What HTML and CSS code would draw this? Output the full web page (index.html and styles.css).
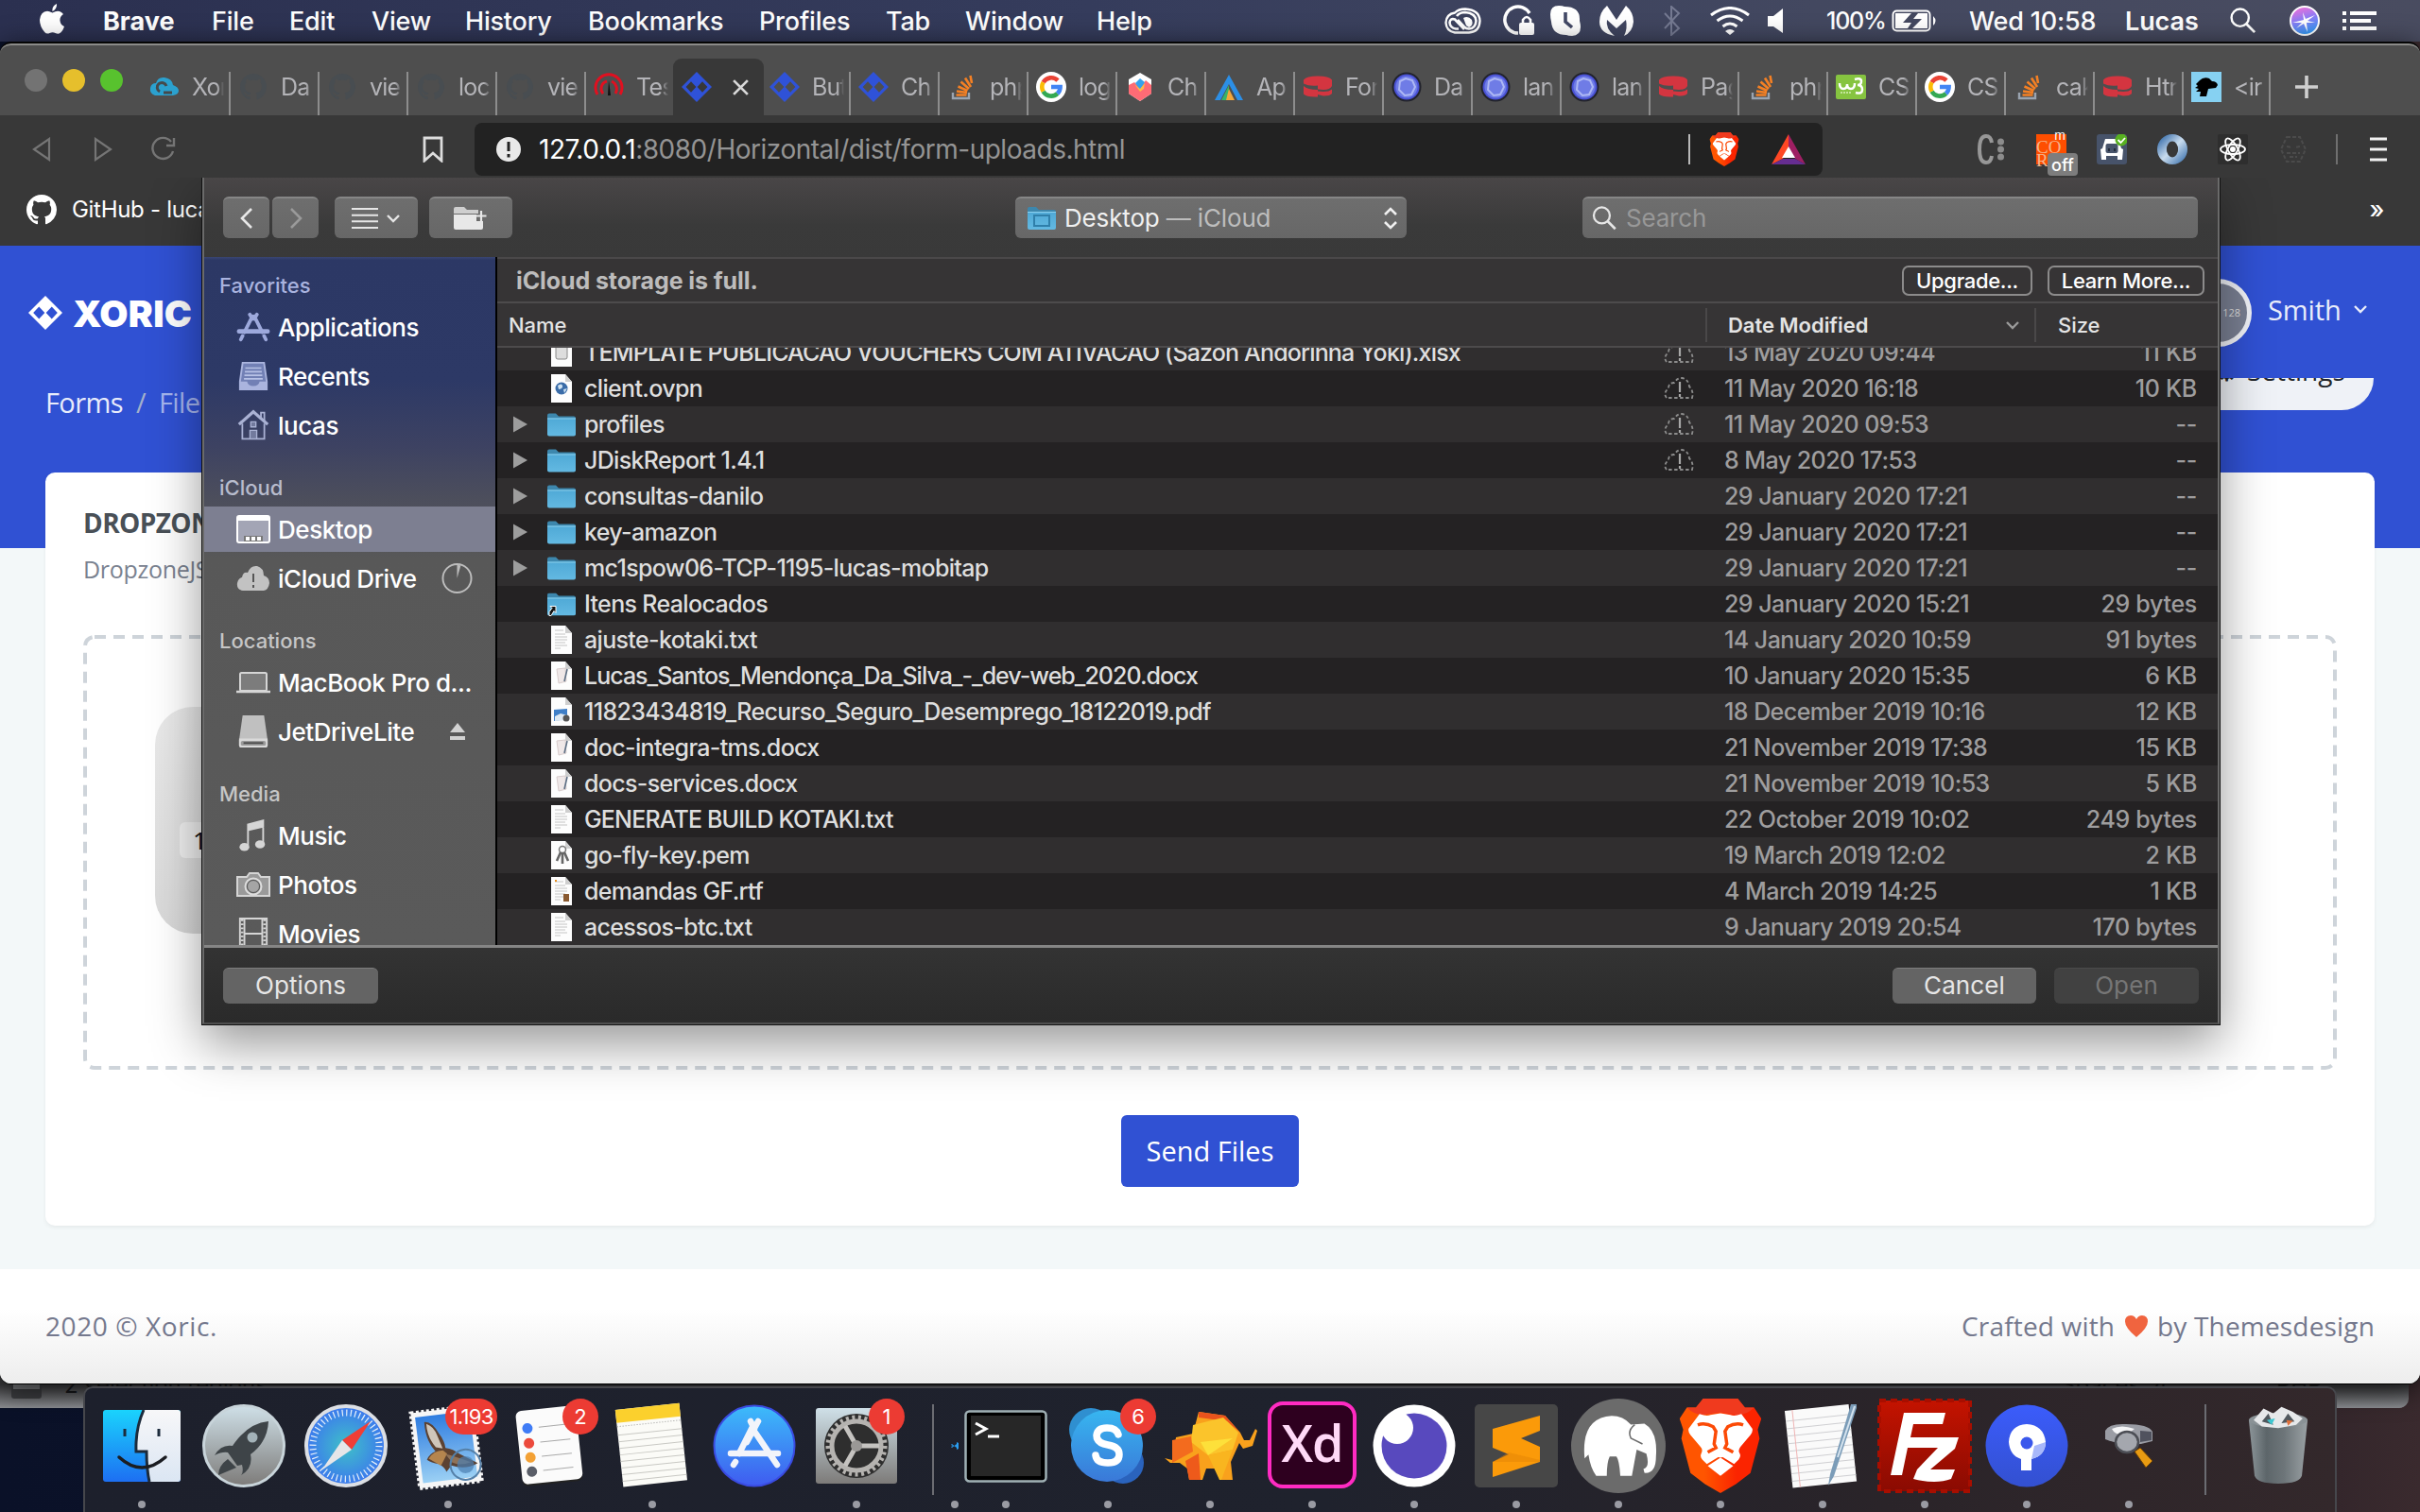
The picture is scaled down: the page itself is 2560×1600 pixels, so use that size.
FILE: index.html
```html
<!DOCTYPE html>
<html lang="en">
<head>
<meta charset="utf-8">
<title>Xoric - File Uploads</title>
<link rel="stylesheet" href="styles.css">
</head>
<body>
<svg class="defs" aria-hidden="true">
  <defs>
    <linearGradient id="gFolder" x1="0" y1="0" x2="0" y2="1"><stop offset="0" stop-color="#4fa9d6"/><stop offset="1" stop-color="#63b9e2"/></linearGradient>
    <linearGradient id="gSilver" x1="0" y1="0" x2="0" y2="1"><stop offset="0" stop-color="#cfe0e8"/><stop offset="1" stop-color="#7d7b79"/></linearGradient>
    <linearGradient id="gFinder" x1="0" y1="0" x2="0" y2="1"><stop offset="0" stop-color="#1ad3fd"/><stop offset="1" stop-color="#1d6ff2"/></linearGradient>
    <linearGradient id="gFace" x1="0" y1="0" x2="0" y2="1"><stop offset="0" stop-color="#f7f7f9"/><stop offset="1" stop-color="#dbe6f3"/></linearGradient>
    <radialGradient id="gSafari"><stop offset="0" stop-color="#3fc0c8"/><stop offset="1" stop-color="#3c78ee"/></radialGradient>
    <linearGradient id="gStore" x1="0" y1="0" x2="0" y2="1"><stop offset="0" stop-color="#3cbcfa"/><stop offset="1" stop-color="#3f5bf0"/></linearGradient>
    <linearGradient id="gSkype" x1="0" y1="0" x2="0" y2="1"><stop offset="0" stop-color="#37b6f0"/><stop offset="1" stop-color="#3a78d8"/></linearGradient>
    <linearGradient id="gLion" x1="0" y1="0" x2="1" y2="0"><stop offset=".3" stop-color="#ff5500"/><stop offset=".7" stop-color="#fb2400"/></linearGradient>
    <linearGradient id="gFz" x1="0" y1="0" x2="0" y2="1"><stop offset="0" stop-color="#c41300"/><stop offset="1" stop-color="#8a0b02"/></linearGradient>
    <linearGradient id="gFork" x1="0" y1="0" x2="0" y2="1"><stop offset="0" stop-color="#3b5cfb"/><stop offset="1" stop-color="#3350d0"/></linearGradient>
    <linearGradient id="gTrash" x1="0" y1="0" x2="1" y2="0"><stop offset="0" stop-color="#8d969a"/><stop offset=".3" stop-color="#5d666a"/><stop offset=".6" stop-color="#6d7579"/><stop offset="1" stop-color="#9aa1a4"/></linearGradient>
    <linearGradient id="gSky" x1="0" y1="0" x2="0" y2="1"><stop offset="0" stop-color="#2f7de0"/><stop offset="1" stop-color="#9bd0f4"/></linearGradient>
    <linearGradient id="gSiri" x1=".3" y1="0" x2=".6" y2="1"><stop offset="0" stop-color="#f06fd8"/><stop offset=".45" stop-color="#8d7cf5"/><stop offset="1" stop-color="#2c9cf5"/></linearGradient>
    <linearGradient id="gRing" x1="0" y1="0" x2="1" y2="1"><stop offset="0" stop-color="#4f7fb5"/><stop offset=".5" stop-color="#c9dcee"/><stop offset="1" stop-color="#5a88bb"/></linearGradient>

    <symbol id="folder" viewBox="0 0 30 24"><path d="M0 2q0-2 2-2h7l3 3h16q2 0 2 2v3H0z" fill="#3d87ad"/><path d="M0 5h30v17q0 2-2 2H2q-2 0-2-2z" fill="url(#gFolder)"/><path d="M0 5.500h30" stroke="#8bd0ee"/></symbol>
    <symbol id="doc" viewBox="0 0 24 30"><path d="M1 0h15l7 8v22H1z" fill="#fdfdfd"/><path d="M16 0l7 8h-7z" fill="#cfcfcf"/></symbol>
    <symbol id="txt" viewBox="0 0 24 30"><use href="#doc"/><path d="M5 5h9M5 9h11M5 12h13M5 15h13M5 18h11M5 21h13M5 24h6" stroke="#c4c4c4"/></symbol>
    <symbol id="word" viewBox="0 0 24 30"><use href="#doc"/><path d="M7 8l9-1 1 14-8 2z" fill="#efe8e8" stroke="#d8cccc"/><path d="M18 8l-3 13" stroke="#5d6f84" stroke-width="1.600"/></symbol>
    <symbol id="tri" viewBox="0 0 16 18"><path d="M0 0l16 9L0 18z" fill="#9d9d9d"/></symbol>
    <symbol id="cloudw" viewBox="0 0 32 24"><path d="M3 22q-4-5 2-10 0-6 6-6 3-5 8-5 7 1 8 9 5 5 3 12z" fill="none" stroke="#8c8c8c" stroke-width="1.800" stroke-dasharray="3.500 2.500"/><path d="M17 5v11M17 18v3" stroke="#a8a8a8" stroke-width="2.200"/></symbol>

    <symbol id="xlogo" viewBox="0 0 32 32"><path fill-rule="evenodd" d="M16 0L32 16 16 32 0 16zM10 10.200L4.600 16l5.400 5.800L15.400 16zM22 10.200L16.600 16l5.400 5.800L27.400 16z"/></symbol>
    <symbol id="octo" viewBox="0 0 16 16"><path d="M8 0C3.580 0 0 3.580 0 8c0 3.540 2.290 6.530 5.470 7.590.4.070.55-.17.55-.38 0-.19-.01-.82-.01-1.490-2.010.37-2.530-.49-2.690-.94-.09-.23-.48-.94-.82-1.130-.28-.15-.68-.52-.01-.53.630-.01 1.080.58 1.230.82.720 1.210 1.870.87 2.330.66.070-.52.280-.87.510-1.070-1.780-.2-3.640-.89-3.640-3.950 0-.87.310-1.590.820-2.150-.08-.2-.36-1.020.080-2.120 0 0 .67-.21 2.200.82.640-.18 1.320-.27 2-.27s1.360.09 2 .27c1.530-1.040 2.200-.82 2.200-.82.440 1.100.160 1.920.080 2.120.510.560.820 1.270.820 2.150 0 3.070-1.870 3.750-3.650 3.950.290.250.540.730.540 1.480 0 1.070-.01 1.930-.01 2.200 0 .210.150.460.550.380A8.010 8.010 0 0016 8c0-4.420-3.580-8-8-8z"/></symbol>
    <symbol id="so" viewBox="0 0 32 32"><path d="M6 22v6h17v-6" fill="none" stroke="#9aa4b0" stroke-width="2.400"/><path d="M9.500 24.500h11M10 20.500l11 1.500M11.500 15.500l10 4.500M14.500 10.500l8.500 7.500M19 6.500l6 9.500M24.500 4l1.500 8" stroke="#f48024" stroke-width="2.600"/></symbol>
    <symbol id="goog" viewBox="0 0 32 32"><circle cx="16" cy="16" r="16" fill="#fff"/><g fill="none" stroke-width="4.600"><path d="M7.600 11.200A9.700 9.700 0 0 1 23 9.200" stroke="#ea4335"/><path d="M7.600 11.200a9.700 9.700 0 0 0 0 9.600" stroke="#fbbc05"/><path d="M7.600 20.800A9.700 9.700 0 0 0 22.600 23" stroke="#34a853"/><path d="M16 16h9.600a9.700 9.700 0 0 1-3 7" stroke="#4285f4"/></g></symbol>
    <symbol id="cake" viewBox="0 0 32 32"><path d="M1 8.500Q4 4.500 16 4.500t15 4V15q-2 4-9 4l-6-.5V14.500q-9 1-15-2zM1 15q4 4 15 4v7.500Q4 27 1 23.500zM16 20.500l6 .500q6 0 9-2.500V23q-2 2.500-9 2.500l-6-1.500z" fill="#d43540"/></symbol>
    <symbol id="dt" viewBox="0 0 32 32"><circle cx="16" cy="16" r="15.500" fill="#22232c"/><circle cx="16" cy="16" r="13.500" fill="#4a52d6"/><circle cx="16" cy="16" r="11.500" fill="#6f7ce6"/><path d="M9 10l6-3 7 2 3 7-4 8-7 1-6-6z" fill="none" stroke="#aeb8f4" stroke-width="2"/></symbol>
    <symbol id="lion" viewBox="0 0 90 104"><path d="M26 0h38l8 10h10l8 12-4 12 2 10-10 38-16 12-17 10-17-10-16-12L2 44l2-10L0 22 8 10h10z" fill="url(#gLion)"/><path d="M26 0h38l8 10h10q-8 8-18 8l-19-3-19 3Q16 18 8 10h10z" fill="#f03a1e"/><path d="M22 17q8 3 12 1l11-2 11 2q4 2 12-1l12 16q1 3-2 7L67 53q-3 4-1 7t-1 7l-5 5-15-9-15 9-5-5q-3-3-1-7t-1-7L12 40q-3-4-2-7z" fill="#fff"/><path d="M20 29q8-3 17 2l3 5-2 14 2 4-9 5M70 29q-8-3-17 2l-3 5 2 14-2 4 9 5" fill="none" stroke="#fc4a06" stroke-width="3.600"/><path d="M31 61l14-5 14 5-14 4z" fill="#fff"/><path d="M31 74l14-9 14 9-14 11z" fill="#fff"/></symbol>
    <symbol id="mag" viewBox="0 0 30 30"><circle cx="11.500" cy="11.500" r="9.800" fill="none" stroke="currentColor" stroke-width="2.600"/><path d="M18.500 18.500l9.500 9.500" stroke="currentColor" stroke-width="3"/></symbol>
    <symbol id="chev" viewBox="0 0 16 10"><path d="M2 2l6 6 6-6" fill="none" stroke="currentColor" stroke-width="2.400"/></symbol>
  </defs>
</svg>

<div class="desktop">
  <header class="menubar">
    <svg class="apple" viewBox="0 0 26 32"><path d="M18 0q.5 5-4.500 8-.8-5.500 4.500-8zM13.500 9.500Q18 6.800 21 8q2.500.8 4 3-4 2.600-3.500 7T26 24q-2 6-5.500 7.600-2 .4-4-.7-2.700-1.200-6 0-3 1.600-5.300-.9Q0 24 0 17q1-9 8-9.300 2 0 5.500 1.800z" fill="#fff"/></svg>
    <nav class="menus"><b>Brave</b><span>File</span><span>Edit</span><span>View</span><span>History</span><span>Bookmarks</span><span>Profiles</span><span>Tab</span><span>Window</span><span>Help</span></nav>
    <div class="status">
      <svg width="39" height="28" viewBox="0 0 39 28"><path d="M11 5.500Q15 1.500 22 1.500q15 1 15.500 12.500Q37 26 26 26.500H11Q2 25 1.500 16 2 7 11 5.500z" fill="none" stroke="#fff" stroke-width="2.400"/><path d="M21 23L11 12.500Q6 11 5.500 16 6 21.500 12 22.500h3" fill="none" stroke="#fff" stroke-width="2.600"/><path d="M13 9q3-4 9-4 11 1 11.500 9-.5 8-7.500 8.500-3 0-5-2L14 13" fill="none" stroke="#fff" stroke-width="2.600"/><path d="M20 11q5-3 9 2 2 6-3 8l-3-2z" fill="#fff"/></svg>
      <svg width="36" height="34" viewBox="0 0 36 34"><path d="M29 9A14 14 0 1 0 17 30" fill="none" stroke="#fff" stroke-width="3.500"/><path d="M22 20v-4q4-6 8 0v4" fill="none" stroke="#fff" stroke-width="2.600"/><rect x="18" y="19" width="16" height="13" rx="2" fill="#fff"/></svg>
      <svg width="32" height="32" viewBox="0 0 32 32"><path d="M0 9Q0 0 9 0q4 0 6 1 17 0 16 15 4 15-8 16-4 0-6-1Q2 31 1 17 0 13 0 9z" fill="#fff"/><path d="M16 7v10l7 6" fill="none" stroke="#434966" stroke-width="3.600"/></svg>
      <svg width="36" height="32" viewBox="0 0 36 32"><path d="M8 0l10 15L28 0q8 7 8 17-1 11-10 15 4-8 2-17l-10 9-10-9q-2 9 8 17Q0 29 0 17 0 7 8 0z" fill="#fff"/></svg>
      <svg width="20" height="32" viewBox="0 0 20 32"><path d="M2 8l15 16-8 7V1l8 7L2 24" fill="none" stroke="#757a92" stroke-width="2"/></svg>
      <svg width="42" height="30" viewBox="0 0 42 30"><g fill="none" stroke="#fff" stroke-width="3"><path d="M1 9q20-15 40 0M7.500 15q13.500-10 27 0M13.500 21q7.500-6 15 0"/></g><path d="M16 26q5-4 10 0l-5 4z" fill="#fff"/></svg>
      <svg width="18" height="26" viewBox="0 0 18 26"><path d="M0 8h6L16 0v26L6 19H0z" fill="#fff"/></svg>
      <span class="pct">100%</span>
      <svg width="48" height="24" viewBox="0 0 48 24"><rect x="1.500" y="1.500" width="39" height="21" rx="4" fill="none" stroke="#fff" stroke-width="2"/><path d="M44 7q5 5 0 10z" fill="#fff"/><path d="M4 4h17l-9 10h9l-4 6H4zM38 20H22l10-10h-9l5-6h10z" fill="#fff"/></svg>
      <span class="clock">Wed 10:58</span>
      <span class="user">Lucas</span>
      <svg class="w" width="30" height="28"><use href="#mag"/></svg>
      <svg width="32" height="32" viewBox="0 0 32 32"><circle cx="16" cy="16" r="15" fill="url(#gSiri)" stroke="#fff" stroke-width="2"/><path d="M3 18l12-3-1-8 3 7 10-4-8 6 8 2-9 0 1 10-4-9-8 5 6-6z" fill="#fff"/></svg>
      <svg width="36" height="20" viewBox="0 0 36 20"><path d="M8 2h28M8 10h22M8 18h28M0 2h4M0 10h4M0 18h4" stroke="#fff" stroke-width="4"/></svg>
    </div>
  </header>

  <div class="behind"><svg width="32" height="30" viewBox="0 0 32 30"><rect width="32" height="30" rx="3" fill="#3c3d40"/><path d="M2 2h28v18H2z" fill="#77797c"/></svg><span class="b1">2 selection regions</span><span class="b2">Spaces: 4</span><span class="b3">PHP</span></div>

  <section class="browser">
    <div class="tabstrip">
      <div class="lights"><i></i><i class="y"></i><i class="g"></i></div>
      <div class="tab"><svg viewBox="0 0 32 32"><path d="M6 25q-6-2-5-8 1-5 6-5Q9 5 16 6q8 1 9 8 6 2 6 6t-6 5z" fill="#2ba1cf"/><path d="M11 21a5 5 0 1 1 7-6M15 22h9" fill="none" stroke="#45494b" stroke-width="3"/></svg><span>Xor</span></div>
      <div class="tab"><svg class="dim" viewBox="0 0 16 16"><use href="#octo"/></svg><span>Da</span></div>
      <div class="tab"><svg class="dim" viewBox="0 0 16 16"><use href="#octo"/></svg><span>vie</span></div>
      <div class="tab"><svg class="dim" viewBox="0 0 16 16"><use href="#octo"/></svg><span>loc</span></div>
      <div class="tab"><svg class="dim" viewBox="0 0 16 16"><use href="#octo"/></svg><span>vie</span></div>
      <div class="tab last"><svg viewBox="0 0 32 32"><path d="M4 24a14 14 0 1 1 24 0M10 23a8 8 0 0 1 4-13M19 10a9 9 0 0 1 4 13" fill="none" stroke="#e01020" stroke-width="3"/><path d="M15 25l1-16 2 16z" fill="#111"/></svg><span>Tes</span></div>
      <div class="tab active"><svg class="blue" viewBox="0 0 32 32"><use href="#xlogo"/></svg><svg class="x" viewBox="0 0 18 18"><path d="M2 2l14 14M16 2L2 16" stroke="#d8d8d8" stroke-width="2.600"/></svg></div>
      <div class="tab"><svg class="blue" viewBox="0 0 32 32"><use href="#xlogo"/></svg><span>But</span></div>
      <div class="tab"><svg class="blue" viewBox="0 0 32 32"><use href="#xlogo"/></svg><span>Ch</span></div>
      <div class="tab"><svg viewBox="0 0 32 32"><use href="#so"/></svg><span>php</span></div>
      <div class="tab"><svg viewBox="0 0 32 32"><use href="#goog"/></svg><span>log</span></div>
      <div class="tab"><svg viewBox="0 0 32 32"><path d="M16 1l12 7v15l-12 8-12-8V8z" fill="#fff"/><path d="M4 14l6-3 6 6 6-8 6 5v9l-12 8-12-8z" fill="#fe6b75"/><path d="M11 12l5-5 5 4-5 8z" fill="#36a2eb"/><path d="M10 13l6 5 5-6-1 6-4 3z" fill="#ffb94a"/></svg><span>Ch</span></div>
      <div class="tab"><svg viewBox="0 0 32 32"><path d="M16 3L1 30h6l9-17 9 17h6z" fill="#2c8fe6"/><path d="M16 14L8 30h8z" fill="#37b36b"/><path d="M16 18l6 12h-9z" fill="#f2a73b"/></svg><span>Ap</span></div>
      <div class="tab"><svg viewBox="0 0 32 32"><use href="#cake"/></svg><span>For</span></div>
      <div class="tab"><svg viewBox="0 0 32 32"><use href="#dt"/></svg><span>Da</span></div>
      <div class="tab"><svg viewBox="0 0 32 32"><use href="#dt"/></svg><span>lan</span></div>
      <div class="tab"><svg viewBox="0 0 32 32"><use href="#dt"/></svg><span>lan</span></div>
      <div class="tab"><svg viewBox="0 0 32 32"><use href="#cake"/></svg><span>Pag</span></div>
      <div class="tab"><svg viewBox="0 0 32 32"><use href="#so"/></svg><span>php</span></div>
      <div class="tab"><svg viewBox="0 0 32 32"><rect y="3" width="32" height="26" rx="2" fill="#86c440"/><path d="M4 12q0 6 4 6t4-5q0 5 4 5t4-6M20 8q7-2 7 2 0 4-4 4 5 0 5 5 0 5-7 3" fill="none" stroke="#fff" stroke-width="2.500"/><path d="M5 22h12" stroke="#d8f0b8" stroke-width="1.500" stroke-dasharray="2 1"/></svg><span>CS</span></div>
      <div class="tab"><svg viewBox="0 0 32 32"><use href="#goog"/></svg><span>CS</span></div>
      <div class="tab"><svg viewBox="0 0 32 32"><use href="#so"/></svg><span>cak</span></div>
      <div class="tab"><svg viewBox="0 0 32 32"><use href="#cake"/></svg><span>Htr</span></div>
      <div class="tab end"><svg viewBox="0 0 32 32"><path d="M0 0h32v32H0z" fill="#86d1f2"/><path d="M5 13l4-4q4-4 10-2l3 3q5 0 6 4l-2 3-8 1-2 8-7 0 1-5-5 0 3-3-4-1 3-2z" fill="#000"/></svg><span>&lt;ir</span></div>
      <svg class="plus" viewBox="0 0 24 24"><path d="M12 0v24M0 12h24" stroke="#cfcfcf" stroke-width="3.600"/></svg>
    </div>

    <div class="toolbar">
      <svg width="20" height="26" viewBox="0 0 20 26"><path d="M18 2v22L2 13z" fill="none" stroke="#757575" stroke-width="2.200"/></svg>
      <svg width="20" height="26" viewBox="0 0 20 26"><path d="M2 2v22l16-11z" fill="none" stroke="#757575" stroke-width="2.200"/></svg>
      <svg width="28" height="28" viewBox="0 0 28 28"><path d="M22 6A11 11 0 1 0 24 16M25 2v8h-8" fill="none" stroke="#757575" stroke-width="2.400"/></svg>
      <svg width="22" height="28" viewBox="0 0 22 28"><path d="M2 2h18v24l-9-8-9 8z" fill="none" stroke="#ddd" stroke-width="2.800"/></svg>
      <div class="url">
        <svg width="26" height="26" viewBox="0 0 26 26"><circle cx="13" cy="13" r="13" fill="#e9e9e9"/><path d="M13 5v10M13 18v3.500" stroke="#222" stroke-width="3"/></svg>
        <span class="addr"><em>127.0.0.1</em>:8080/Horizontal/dist/form-uploads.html</span>
        <i class="bar"></i>
        <svg width="32" height="36" viewBox="0 0 90 104"><use href="#lion"/></svg>
        <svg width="36" height="32" viewBox="0 0 36 32"><path d="M18 0v14L12 26 0 32z" fill="#ff4724"/><path d="M18 0v14l7 12 11 6z" fill="#9e1f63"/><path d="M0 32h36l-11-6H12z" fill="#662d91"/><path d="M18 13l7 12H11z" fill="#fff"/></svg>
      </div>
      <svg width="28" height="32" viewBox="0 0 28 32"><path d="M15 9Q14 2 9 2 2 2 2 16t7 14q5 0 6-7" fill="none" stroke="#979797" stroke-width="4"/><circle cx="24.500" cy="8" r="3.500" fill="#8c8c8c"/><circle cx="24.500" cy="16" r="3.500" fill="#8c8c8c"/><circle cx="24.500" cy="24" r="3.500" fill="#8c8c8c"/></svg>
      <div class="cors"><span>CO</span><sup>m</sup><span class="r">R</span><b>off</b></div>
      <svg width="32" height="32" viewBox="0 0 32 32"><rect width="32" height="32" rx="3" fill="#47536a"/><path d="M9 5h14l3 10 2 1-1 11h-5v-4H10v4H5L4 16l2-1z" fill="#fff"/><rect x="9.500" y="10" width="13" height="10" rx="2" fill="#47536a"/><path d="M13 15v3M19 15v3" stroke="#222b3a" stroke-width="2"/><circle cx="26" cy="6" r="6.500" fill="#58b020"/><path d="M22.500 6l3 3 4.500-5" fill="none" stroke="#fff" stroke-width="1.800"/></svg>
      <svg width="32" height="32" viewBox="0 0 32 32"><circle cx="16" cy="16" r="11" fill="none" stroke="url(#gRing)" stroke-width="10"/><ellipse cx="16" cy="16" rx="6" ry="8.500" fill="#383838"/></svg>
      <svg width="32" height="32" viewBox="0 0 32 32"><rect width="32" height="32" rx="2" fill="#2e2e2e"/><g fill="none" stroke="#fff" stroke-width="1.800"><ellipse cx="16" cy="16" rx="13" ry="5"/><ellipse cx="16" cy="16" rx="13" ry="5" transform="rotate(60 16 16)"/><ellipse cx="16" cy="16" rx="13" ry="5" transform="rotate(120 16 16)"/></g><circle cx="16" cy="16" r="3" fill="#fff"/></svg>
      <svg width="32" height="32" viewBox="0 0 32 32"><path d="M9 3h14l6 13-6 13H9L3 16zM9 13l6 1M23 13l-6 1M9 20h14M12 24h8" fill="none" stroke="#4b4b4b" stroke-width="2" stroke-dasharray="4 2"/></svg>
      <i class="bar dimbar"></i>
      <svg width="18" height="26" viewBox="0 0 18 26"><path d="M0 2h18M0 13h18M0 24h18" stroke="#f2f2f2" stroke-width="3"/></svg>
    </div>

    <div class="bookmarks"><svg viewBox="0 0 16 16" width="32" height="32"><use href="#octo" fill="#fff"/></svg><span>GitHub - luca</span><b>»</b></div>

    <main class="page">
      <div class="hero">
        <div class="brand"><svg class="logo" viewBox="0 0 32 32"><use href="#xlogo"/></svg><span>XORIC</span><div class="profile"><div class="avatar">128</div><span>Smith</span><svg width="16" height="10"><use href="#chev"/></svg></div></div>
        <div class="crumbs"><span>Forms</span><i>/</i><em>File</em></div>
        <div class="settings"><span>⚙</span><span>Settings</span></div>
      </div>
      <div class="card">
        <h4>DROPZONE</h4>
        <p>DropzoneJS</p>
        <div class="dropzone"><svg class="dash"><rect x="2" y="2" width="2380" height="456" rx="10"/></svg><div class="preview"><span>1</span></div></div>
        <button class="send">Send Files</button>
      </div>
      <footer class="foot"><span class="cr">2020 © Xoric.</span><span class="by">Crafted with <svg width="24" height="23" viewBox="0 0 24 23"><path d="M12 23Q0 13 0 6.500 0 0 6 0q4 0 6 4 2-4 6-4 6 0 6 6.500Q24 13 12 23z" fill="#f0643f"/></svg> by Themesdesign</span></footer>
    </main>
  </section>

  <div class="sheet-clip">
  <section class="sheet">
    <div class="sheet-head">
      <div class="btn back"><svg width="14" height="24" viewBox="0 0 14 24"><path d="M12 2L2 12l10 10" fill="none" stroke="#e8e8e8" stroke-width="2.600"/></svg></div>
      <div class="btn fwd"><svg width="14" height="24" viewBox="0 0 14 24"><path d="M2 2l10 10L2 22" fill="none" stroke="#9a9a9a" stroke-width="2.600"/></svg></div>
      <div class="btn view"><svg width="28" height="22" viewBox="0 0 28 22"><path d="M0 1h28M0 7.700h28M0 14.300h28M0 21h28" stroke="#e6e6e6" stroke-width="2"/></svg><svg class="lt" width="16" height="10"><use href="#chev"/></svg></div>
      <div class="btn newf"><svg width="36" height="24" viewBox="0 0 36 24"><path d="M0 2q0-2 2-2h9l3 3h12v4H0z" fill="#cfcfcf"/><path d="M0 8h24v7h7v7q0 2-2 2H2q-2 0-2-2z" fill="#e8e8e8"/><path d="M29 4v11M23.500 9.500h11" stroke="#e8e8e8" stroke-width="2.200"/></svg></div>
      <div class="btn popup"><svg width="30" height="24" viewBox="0 0 30 24"><use href="#folder"/><path d="M7 9h16v11H7z" fill="none" stroke="#2f7faa" stroke-width="2"/></svg><span>Desktop <em>— iCloud</em></span><svg class="ud" width="16" height="24" viewBox="0 0 16 24"><path d="M2 8l6-6 6 6M2 16l6 6 6-6" fill="none" stroke="#f0f0f0" stroke-width="2.600"/></svg></div>
      <div class="btn search"><svg width="27" height="26"><use href="#mag"/></svg><span>Search</span></div>
    </div>
    <div class="sheet-body">
      <aside class="side">
        <h5>Favorites</h5>
        <div class="it"><svg viewBox="0 0 36 36"><path d="M17 6l-9 18M19 6l9 18M14 4l3 5M22 4l-3 5M6 28l-2 4M30 28l2 4" stroke="#9da9dc" stroke-width="4" stroke-linecap="round"/><path d="M2 23h32" stroke="#9da9dc" stroke-width="5" stroke-linecap="round"/></svg><span>Applications</span></div>
        <div class="it"><svg viewBox="0 0 36 36"><path d="M6 3h24l3 21v9H3v-9z" fill="#7280b5" stroke="#aab4de" stroke-width="2"/><path d="M9 9h18M8.500 13h19M8 17h20M7.500 21h21" stroke="#b8c1e6" stroke-width="1.800"/><path d="M3 24h8q1 5 7 5t7-5h8v9H3z" fill="#aab4de"/></svg><span>Recents</span></div>
        <div class="it"><svg viewBox="0 0 36 38"><path d="M5 17v18h26V17M27 10V4h4v10" fill="none" stroke="#aab2d4" stroke-width="2"/><path d="M1 18L18 3l17 15" fill="none" stroke="#aab2d4" stroke-width="3.600"/><path d="M15 15h6v6h-6zM14 25h8v10h-8z" fill="#727a9d" stroke="#aab2d4" stroke-width="1.500"/></svg><span>lucas</span></div>
        <h5 class="ic">iCloud</h5>
        <div class="it sel"><svg viewBox="0 0 36 30"><rect x="1" y="1" width="34" height="28" rx="2" fill="#a3a5b5" stroke="#fff" stroke-width="2"/><path d="M1 1h34v5H1z" fill="#fff"/><path d="M8 22h20v6H8z" fill="#777"/><path d="M10 25h4M16 25h4M22 25h4" stroke="#fff" stroke-width="4"/></svg><span>Desktop</span></div>
        <div class="it"><svg viewBox="0 0 36 28"><path d="M7 27q-7-1-6-8 1-5 5-6 1-6 6-5 3-8 10-7 7 2 7 10 6 2 6 8-1 7-6 8z" fill="#c2c2c2"/><path d="M18 9v9M18 21v3" stroke="#555" stroke-width="2"/></svg><span>iCloud Drive</span><svg class="end pie" viewBox="0 0 34 34"><circle cx="17" cy="17" r="15.500" fill="none" stroke="#bdbdbd" stroke-width="2"/><path d="M17 17V2l4 1z" fill="#bdbdbd"/></svg></div>
        <h5 class="lo">Locations</h5>
        <div class="it"><svg viewBox="0 0 36 24"><rect x="4" y="2" width="28" height="19" rx="1.500" fill="#7c7c7c" stroke="#d5d5d5" stroke-width="2"/><path d="M0 22h36" stroke="#d5d5d5" stroke-width="2.500"/></svg><span>MacBook Pro d...</span></div>
        <div class="it"><svg viewBox="0 0 36 36"><path d="M6 0h24l4 28v5q0 3-3 3H5q-3 0-3-3v-5z" fill="#c0c0c0"/><path d="M2 26h32v7q0 3-3 3H5q-3 0-3-3z" fill="#dadada"/><rect x="4" y="28.500" width="28" height="5.500" rx="2" fill="#9a9a9a"/><path d="M7 31h22" stroke="#4d4d4d" stroke-width="2"/></svg><span>JetDriveLite</span><svg class="end ej" viewBox="0 0 16 18"><path d="M8 0l8 10H0zM0 14h16v4H0z" fill="#d2d2d2"/></svg></div>
        <h5 class="me">Media</h5>
        <div class="it"><svg viewBox="0 0 36 36"><path d="M11 5L30 0v9L13 13v17H11zM28 8h2v20h-2z" fill="#d5d5d5"/><ellipse cx="8" cy="31" rx="5.500" ry="4.500" fill="#d5d5d5"/><ellipse cx="25.500" cy="28" rx="5.500" ry="4.500" fill="#d5d5d5"/></svg><span>Music</span></div>
        <div class="it"><svg viewBox="0 0 36 26"><path d="M1 5h10l3-4h9l3 4h9v20H1z" fill="#9a9a9a" stroke="#d5d5d5" stroke-width="2"/><circle cx="18" cy="15" r="8.500" fill="#8a8a8a" stroke="#ddd" stroke-width="2"/><circle cx="18" cy="15" r="6.500" fill="#a5a5a5" stroke="#555"/></svg><span>Photos</span></div>
        <div class="it"><svg viewBox="0 0 36 36"><path d="M3 1h30v34H3zM8 1v34M28 1v34M8 18h20" fill="none" stroke="#d5d5d5" stroke-width="2"/><path d="M5.500 2v34M30.500 2v34" stroke="#d5d5d5" stroke-width="3" stroke-dasharray="2 2.500"/></svg><span>Movies</span></div>
      </aside>
      <div class="list">
        <div class="notice"><b>iCloud storage is full.</b><span class="pill up">Upgrade...</span><span class="pill lm">Learn More...</span></div>
        <div class="cols"><span>Name</span><b>Date Modified<svg width="16" height="10"><use href="#chev"/></svg></b><span class="sz">Size</span></div>
        <div class="rows">
          <div class="row"><i></i><svg class="f" viewBox="0 0 24 30"><use href="#doc"/><rect x="6" y="8" width="12" height="14" rx="2" fill="#ddd" stroke="#888"/></svg><span class="caps">TEMPLATE PUBLICACAO VOUCHERS COM ATIVACAO (Sazon Andorinha Yoki).xlsx</span><svg class="c"><use href="#cloudw"/></svg><time>13 May 2020 09:44</time><s>11 KB</s></div>
          <div class="row"><i></i><svg class="f" viewBox="0 0 24 30"><use href="#doc"/><circle cx="12" cy="15" r="6.500" fill="#3a6ca8"/><path d="M8 12q4-3 5 0t-4 4zM14 16l4-1-3 5z" fill="#cfe3f2"/></svg><span>client.ovpn</span><svg class="c"><use href="#cloudw"/></svg><time>11 May 2020 16:18</time><s>10 KB</s></div>
          <div class="row"><svg class="t"><use href="#tri"/></svg><svg class="d"><use href="#folder"/></svg><span>profiles</span><svg class="c"><use href="#cloudw"/></svg><time>11 May 2020 09:53</time><s>--</s></div>
          <div class="row"><svg class="t"><use href="#tri"/></svg><svg class="d"><use href="#folder"/></svg><span>JDiskReport 1.4.1</span><svg class="c"><use href="#cloudw"/></svg><time>8 May 2020 17:53</time><s>--</s></div>
          <div class="row"><svg class="t"><use href="#tri"/></svg><svg class="d"><use href="#folder"/></svg><span>consultas-danilo</span><i></i><time>29 January 2020 17:21</time><s>--</s></div>
          <div class="row"><svg class="t"><use href="#tri"/></svg><svg class="d"><use href="#folder"/></svg><span>key-amazon</span><i></i><time>29 January 2020 17:21</time><s>--</s></div>
          <div class="row"><svg class="t"><use href="#tri"/></svg><svg class="d"><use href="#folder"/></svg><span>mc1spow06-TCP-1195-lucas-mobitap</span><i></i><time>29 January 2020 17:21</time><s>--</s></div>
          <div class="row"><i></i><svg class="d" viewBox="0 0 30 24"><use href="#folder"/><path d="M2 24v-4l3-4-2-2h6v7l-2-2-3 5z" fill="#111" stroke="#fff"/></svg><span>Itens Realocados</span><i></i><time>29 January 2020 15:21</time><s>29 bytes</s></div>
          <div class="row"><i></i><svg class="f"><use href="#txt"/></svg><span>ajuste-kotaki.txt</span><i></i><time>14 January 2020 10:59</time><s>91 bytes</s></div>
          <div class="row"><i></i><svg class="f"><use href="#word"/></svg><span class="long">Lucas_Santos_Mendonça_Da_Silva_-_dev-web_2020.docx</span><i></i><time>10 January 2020 15:35</time><s>6 KB</s></div>
          <div class="row"><i></i><svg class="f" viewBox="0 0 24 30"><use href="#doc"/><path d="M4 13l14-1v11l-14 2z" fill="#3f7fc8"/><path d="M5 20l6-3 7 2v5l-13 1z" fill="#dfe9f2"/><circle cx="17" cy="22" r="3.500" fill="#555"/></svg><span>11823434819_Recurso_Seguro_Desemprego_18122019.pdf</span><i></i><time>18 December 2019 10:16</time><s>12 KB</s></div>
          <div class="row"><i></i><svg class="f"><use href="#word"/></svg><span>doc-integra-tms.docx</span><i></i><time>21 November 2019 17:38</time><s>15 KB</s></div>
          <div class="row"><i></i><svg class="f"><use href="#word"/></svg><span>docs-services.docx</span><i></i><time>21 November 2019 10:53</time><s>5 KB</s></div>
          <div class="row"><i></i><svg class="f"><use href="#txt"/></svg><span class="caps">GENERATE BUILD KOTAKI.txt</span><i></i><time>22 October 2019 10:02</time><s>249 bytes</s></div>
          <div class="row"><i></i><svg class="f" viewBox="0 0 24 30"><use href="#doc"/><circle cx="13" cy="9" r="3.500" fill="none" stroke="#777" stroke-width="1.500"/><path d="M11 12l-4 9M13 12v12M15 12l4 9" stroke="#666" stroke-width="2.600"/></svg><span>go-fly-key.pem</span><i></i><time>19 March 2019 12:02</time><s>2 KB</s></div>
          <div class="row"><i></i><svg class="f" viewBox="0 0 24 30"><use href="#txt"/><path d="M14 18h6v8h-6z" fill="#8a5a30"/><path d="M5 3h2v2H5z" fill="#e89020"/></svg><span>demandas GF.rtf</span><i></i><time>4 March 2019 14:25</time><s>1 KB</s></div>
          <div class="row"><i></i><svg class="f"><use href="#txt"/></svg><span>acessos-btc.txt</span><i></i><time>9 January 2019 20:54</time><s>170 bytes</s></div>
        </div>
      </div>
    </div>
    <div class="sheet-foot"><span class="fb opt">Options</span><span class="fb can">Cancel</span><span class="fb open">Open</span></div>
  </section>
  </div>

  <div class="dock">
    <div class="app on"><svg viewBox="0 0 88 88"><rect x="3" y="6" width="82" height="76" rx="3" fill="url(#gFinder)"/><path d="M46 6h36q3 0 3 3v70q0 3-3 3H52q-3-14-3-32H38Q37 26 46 6z" fill="url(#gFace)"/><path d="M46 6Q37 26 38 50h11q0 18 3 32M26 26v8M62 26v8" fill="none" stroke="#1c2b3c" stroke-width="3"/><path d="M20 56q24 22 49 0" fill="none" stroke="#1b1d22" stroke-width="3.500" stroke-linecap="round"/></svg></div>
    <div class="app"><svg viewBox="0 0 88 88"><circle cx="44" cy="44" r="42.500" fill="url(#gSilver)" stroke="#c8d4da" stroke-width="3"/><path d="M70 18Q48 20 32 44q-12-2-19 10 8-4 14-3l10 14 5-1q2 8-1 11 13-7 10-22 18-13 19-35z" fill="#3e4448"/><circle cx="53" cy="35" r="5.500" fill="#a3b2b8"/><path d="M27 58l9 9-19 8q0-10 10-17z" fill="#3e4448"/></svg></div>
    <div class="app"><svg viewBox="0 0 88 88"><circle cx="44" cy="44" r="42" fill="url(#gSafari)" stroke="#dcdfe4" stroke-width="4"/><circle cx="44" cy="44" r="35" fill="none" stroke="#e6f0fa" stroke-width="7" stroke-dasharray="1.200 3.380"/><path d="M70 18L50 48 40 38z" fill="#f03e36"/><path d="M18 70l22-32 10 10z" fill="#e6e6e8"/></svg></div>
    <div class="app on"><svg viewBox="0 0 88 88"><g transform="rotate(-7 44 44)"><rect x="9" y="5" width="66" height="80" fill="#f6f6f6" stroke="#f6f6f6" stroke-width="4" stroke-dasharray="3 2.500"/><rect x="13" y="10" width="58" height="70" fill="url(#gSky)"/><path d="M22 16q8 0 14 14 5 8 5 16 8 2 14 8l18 12q-14 6-28-1l-6 6q-2-6-7-9-8-2-12-6 3-6 10-8-9-12-8-32z" fill="#5c4232"/><path d="M24 18q8 4 10 14l4 14-7-2q-8-12-7-26z" fill="#cfc6ba"/><path d="M22 55q6-8 16-7l4 4-8 12z" fill="#b5854e"/><path d="M40 52q10 4 26 12-12 3-20-2z" fill="#8f7258"/><circle cx="60" cy="66" r="16" fill="none" stroke="#5580a8" stroke-width="2"/><circle cx="60" cy="66" r="9" fill="#4c7fb0" opacity=".7"/></g></svg><b class="badge wide">1.193</b></div>
    <div class="app"><svg viewBox="0 0 88 88"><g transform="rotate(-6 44 44)"><rect x="11" y="6" width="64" height="78" rx="6" fill="#222"/><rect x="11" y="4" width="64" height="78" rx="6" fill="#fbfbfb"/><path d="M34 23h32M34 39h32M34 54h32M34 69h32" stroke="#aaa"/><circle cx="22" cy="23" r="5.500" fill="#3f7cf6"/><circle cx="22" cy="39" r="5.500" fill="#ec4a3c"/><circle cx="22" cy="54" r="5.500" fill="#f3a135"/><circle cx="22" cy="69" r="5.500" fill="#5a5e68"/></g></svg><b class="badge">2</b></div>
    <div class="app on"><svg viewBox="0 0 88 88"><g transform="rotate(-6 44 44)"><rect x="9" y="2" width="68" height="82" fill="#fbfbf7"/><path d="M9 2h68v14H9z" fill="#fbd02d"/><path d="M9 20h68" stroke="#999" stroke-dasharray="1 2"/><path d="M9 29h68M9 36h68M9 43h68M9 50h68M9 57h68M9 64h68M9 71h68M9 78h68" stroke="#c9c9c4"/></g></svg></div>
    <div class="app"><svg viewBox="0 0 88 88"><circle cx="44" cy="44" r="42.500" fill="url(#gStore)" stroke="#3a4be0" stroke-width="2"/><path d="M43 22L28 52M40 18l4 8M48 18L36 40M45 30l23 34" stroke="#f2f4fa" stroke-width="6.500" stroke-linecap="round"/><path d="M19 52h50M24 61l-2 3" stroke="#f2f4fa" stroke-width="6.500" stroke-linecap="round"/></svg></div>
    <div class="app on"><svg viewBox="0 0 88 88"><rect x="1" y="4" width="86" height="80" rx="3" fill="url(#gSilver)"/><circle cx="44" cy="44" r="34" fill="#2e2e2e"/><circle cx="44" cy="44" r="26" fill="none" stroke="#b5b3b0" stroke-width="5"/><circle cx="44" cy="44" r="30" fill="none" stroke="#b5b3b0" stroke-width="5" stroke-dasharray="3 3.500"/><path d="M44 44h24M44 44L32 65M44 44L32 23" stroke="#c5c3c0" stroke-width="5"/><circle cx="44" cy="44" r="6" fill="#9a9896"/></svg><b class="badge">1</b></div>
    <div class="sep"></div>
    <div class="mini on"><svg viewBox="0 0 8 8" width="8" height="8"><path d="M0 3l1-1 5 4V2L1 6 0 5l2-1zM6 0l2 1v6L6 8z" fill="#2a9df0"/></svg></div>
    <div class="app on"><svg viewBox="0 0 88 88"><rect x="1.500" y="7.500" width="85" height="74" rx="4" fill="#000" stroke="#9fb0b4" stroke-width="2.500"/><rect x="7" y="12" width="74" height="64" fill="#272727"/><path d="M12 20l11 6-11 6M25 34h12" fill="none" stroke="#fff" stroke-width="3"/></svg></div>
    <div class="app on"><svg viewBox="0 0 88 88"><circle cx="26" cy="27" r="23" fill="#2f8fd0"/><circle cx="60" cy="62" r="22" fill="#2a63bd"/><circle cx="43" cy="44" r="38" fill="url(#gSkype)"/><path d="M55 32q-2-7-12-7t-11 8q0 8 12 10t12 10q0 9-12 9t-13-8" fill="none" stroke="#fff" stroke-width="7.500" stroke-linecap="round"/></svg><b class="badge">6</b></div>
    <div class="app on big"><svg viewBox="0 0 100 88"><path d="M38 8l28 4 16 18 4 8 6 0 6-12 2 2-5 16-10 3-4-6-9 20 2 19H62l-4-12-12 0-4 12H28l-2-12-8-6-10 0-6-5 8 2 4-24 18-4z" fill="#f9a11c"/><path d="M38 8l28 4 16 18-14-12-30-4z" fill="#e9531d"/><path d="M32 22l32-8 16 16-6 18-26 6-18-14z" fill="#fbc42b"/><path d="M40 40l34-4-26 18z" fill="#fde03a"/><path d="M10 38l20-4 2 16-22 12z" fill="#f36b1e"/><path d="M24 60l14-8 2 28H28z" fill="#ee5a1b"/><path d="M48 54l26-6-12 32h-2z" fill="#f9b51f"/></svg></div>
    <div class="app on"><div class="xd">Xd</div></div>
    <div class="app on"><svg viewBox="0 0 88 88"><circle cx="44" cy="44" r="43.500" fill="#fff"/><circle cx="44" cy="44" r="34.500" fill="#5849be"/><circle cx="26" cy="25" r="17" fill="#fff"/><path d="M5 35L35 5l-5 2L6 30z" fill="#fff"/></svg></div>
    <div class="app on"><svg viewBox="0 0 88 88"><rect x="0" y="0" width="88" height="88" rx="5" fill="#474747"/><path d="M19 26l50-14v16L49 36l20 9v16L19 77V61l17-8-17-7z" fill="#fb9a09"/><path d="M36 51l33 8v2L19 61z" fill="#e38306" opacity=".5"/></svg></div>
    <div class="app on"><svg class="xl" viewBox="0 0 98 98"><circle cx="49" cy="49" r="49" fill="#6b6b6b"/><path d="M14 62Q10 20 42 18q12 0 20 9l14-1q14 8 12 34 0 18-12 17l-1-4q7-2 3-16l-10-4-5 27H51q-1-16-4-20h-7q-3 6-3 20H26Q20 72 18 58z" fill="#fff"/><path d="M66 27q-8 6-4 14l12 6" fill="none" stroke="#6b6b6b" stroke-width="1.500"/></svg></div>
    <div class="app on"><svg class="xl" viewBox="0 0 90 104"><use href="#lion"/></svg></div>
    <div class="app on"><svg viewBox="0 0 88 88"><g transform="rotate(-6 44 44)"><rect x="8" y="3" width="68" height="82" fill="#fafafa"/><path d="M8 14h68M8 22h68M8 30h68M8 38h68M8 46h68M8 54h68M8 62h68M8 70h68M8 78h68" stroke="#cfcfd2"/><path d="M16 3v82" stroke="#f0b5b5"/></g><path d="M80 0l-6 0-22 74-2 12 6-10L80 4z" fill="#7b9cb8"/><path d="M78 2L60 56" stroke="#d5e3ee" stroke-width="2"/></svg></div>
    <div class="app on"><svg class="xl" viewBox="0 0 100 100"><rect x="2" y="2" width="96" height="96" fill="url(#gFz)" stroke="#a80e00" stroke-width="4" stroke-dasharray="7 5"/><path d="M28 15h44l-3 12H38l-3 14h22l-4 11H32l-6 29H14z" fill="#fff"/><path d="M44 41h42l-4 12-26 22h26l-4 10q-16 6-40 0l4-10 22-23H42z" fill="#fff"/></svg></div>
    <div class="app on"><svg viewBox="0 0 88 88"><circle cx="44" cy="44" r="43.500" fill="url(#gFork)"/><path d="M38 44v26h11V58q15-4 15-18Q62 22 44 21 26 22 25 40q1 14 13 18" fill="#fff"/><circle cx="44" cy="41" r="6.500" fill="#3a58ec"/><path d="M49 58q15-4 15-18l-12 4z" fill="#a8b8fa"/></svg></div>
    <div class="app on"><svg viewBox="0 0 88 88"><path d="M19 28q4-8 22-7 24 0 28 8v10q-24 8-50-2z" fill="#9a9ca4"/><path d="M26 26q10-5 24 0l-8 6q-12 2-16-6z" fill="#f4f4f6"/><path d="M56 28l12 1v9l-12 2z" fill="#50525e"/><ellipse cx="42" cy="40" rx="12" ry="11" fill="#a4a7ae" stroke="#4c4e55" stroke-width="2.500"/><path d="M50 50l6-4 13 14-7 7z" fill="#e89b12" stroke="#6a4108"/></svg></div>
    <div class="sep"></div>
    <div class="app"><svg viewBox="0 0 88 92"><path d="M8 12h72l-7 68q-2 10-29 10T15 80z" fill="url(#gTrash)"/><ellipse cx="44" cy="12" rx="36" ry="9" fill="#8a9296"/><path d="M14 12l12-14 12 6 10-8 14 6 12 8-8 8-22 4-20-2z" fill="#e6e8ea"/><path d="M24 14l8-10 6 14zM48 16l8-12 8 10z" fill="#50585e"/><path d="M30 12l10-2-4 8z" fill="#3fc6d0"/><path d="M54 12l8 1-6 6z" fill="#e0703a"/></svg></div>
  </div>
</div>
</body>
</html>
```

FILE: styles.css
```css
* { box-sizing: border-box; }
body { margin: 0; width: 2560px; height: 1600px; overflow: hidden; font-family: Inter, "Liberation Sans", sans-serif; }
svg { display: block; flex: none; }
em, i, s { font-style: normal; text-decoration: none; }
.defs { position: absolute; width: 0; height: 0; }
.desktop { position: relative; width: 2560px; height: 1600px; overflow: hidden; background: linear-gradient(90deg, #0a1128 0, #12162c 50%, #33262b 96%, #3a2a2e 100%); }

/* menu bar */
.menubar { height: 44px; display: flex; align-items: center; background: linear-gradient(90deg, #2b3050, #353c5c 45%, #434860 75%, #494c60); color: #fff; font-size: 27px; font-weight: 500; letter-spacing: -.2px; white-space: nowrap; }
.apple { width: 26px; height: 32px; margin: -5px 0 0 42px; }
.menus { margin-left: 41px; width: 1130px; display: grid; grid-template-columns: 115px 82px 87px 99px 130px 181px 134px 84px 139px 60px; }
.menus b { font-weight: 700; letter-spacing: 0; }
.status { margin-left: 289px; display: grid; align-items: center; grid-template-columns: 61px 51px 52px 67px 50px 61px 62px 69px 82px 165px 110px 64px 56px 36px; color: #fff; }
.pct { font-size: 25px; letter-spacing: -1.2px; }
.clock { letter-spacing: -.2px; }
.user { font-weight: 600; letter-spacing: -.1px; }

/* window peeking out behind the browser */
.behind { position: absolute; left: 0; top: 1440px; width: 2548px; height: 50px; border-radius: 0 0 10px 0; background: linear-gradient(180deg, #3a3a3c 50%, #8b8d91); color: #17181b; font-size: 24px; padding: 10px 0 0 12px; }
.behind span { position: absolute; top: 11px; }
.b1 { left: 68px; } .b2 { left: 2180px; } .b3 { left: 2408px; }

/* browser */
.browser { position: absolute; left: 0; top: 44px; width: 2560px; height: 1420px; border-radius: 12px; overflow: hidden; background: #383838; border-top: 2px solid #050505; box-shadow: 0 1px 0 #000, 0 6px 30px rgba(0,0,0,.7); }
.tabstrip { height: 76px; border-top: 2px solid #8b8b89; background: #4e4e4e; display: flex; padding-left: 26px; border-radius: 11px 11px 0 0; }
.lights { display: flex; gap: 16px; width: 124px; margin-top: 25px; }
.lights i { width: 24px; height: 24px; border-radius: 50%; background: #737373; }
.lights .y { background: #e6bf2c; } .lights .g { background: #58c22e; }
.tab { width: 94px; height: 46px; margin-top: 28px; flex: none; display: flex; gap: 13px; padding-left: 8px; border-right: 2px solid #8d8d8d; color: #b4b4b8; font-size: 25px; letter-spacing: -.8px; }
.tab svg { width: 32px; height: 32px; }
.tab span { height: 32px; line-height: 32px; width: 34px; overflow: hidden; white-space: nowrap; -webkit-mask-image: linear-gradient(90deg, #000 78%, transparent); mask-image: linear-gradient(90deg, #000 78%, transparent); }
.tab.last { border-right-color: transparent; }
.tab.end { width: 92px; }
.tab.active { background: #383838; height: 60px; margin-top: 14px; width: 96px; margin-left: -2px; margin-right: -2px; border: 0; border-radius: 9px 9px 0 0; padding: 14px 0 0 9px; gap: 21px; }
.tab .x { width: 19px; height: 19px; margin-top: 7px; }
.tab svg.dim { fill: #484d51; width: 28px; height: 28px; margin: 2px; }
.blue { fill: #2f52d8; }
.plus { width: 24px; height: 24px; margin: 32px 0 0 26px; }
.toolbar { height: 66px; padding-left: 34px; display: grid; align-items: center; grid-template-columns: 65px 60px 288px 55px 1590px 62px 64px 64px 64px 64px 61px 36px 20px; }
.toolbar > * { margin-top: 5px; }
.url { height: 56px; width: 1426px; background: #222; border-radius: 8px; display: flex; align-items: center; padding: 0 18px 0 23px; color: #949494; font-size: 28px; letter-spacing: -.48px; }
.url em { color: #fff; }
.addr { margin-left: 19px; flex: 1; }
.bar { width: 2px; height: 32px; background: #b9b9b9; margin-right: 20px; }
.url svg:last-child { margin-left: 34px; }
.dimbar { background: #6f6f6f; }
.cors { position: relative; width: 32px; height: 32px; background: #fe4e00; font: 19px/19px "Liberation Serif", serif; color: #f4b48c; padding-top: 4px; }
.cors span { display: block; height: 14px; }
.cors sup { position: absolute; right: 1px; top: -7px; font: 14px "Liberation Sans", sans-serif; color: #fff; }
.cors b { position: absolute; left: 12px; top: 20px; width: 32px; height: 24px; border-radius: 4px; background: #7d7d7d; color: #fff; font: 500 18px/25px Inter, sans-serif; text-align: center; }
.bookmarks { height: 72px; padding: 0 38px 5px 28px; display: flex; align-items: center; color: #fff; font-size: 24px; letter-spacing: -.3px; }
.bookmarks span { margin-left: 16px; flex: 1; }
.bookmarks b { font-size: 26px; font-weight: 500; }

/* web page */
.page { height: 1204px; background: #f3f8f9; font-family: "Open Sans", "Noto Sans", sans-serif; display: flex; flex-direction: column; }
.hero { height: 320px; flex: none; background: #3051d3; color: #fff; position: relative; padding: 36px 55px 0 30px; }
.brand { display: flex; align-items: center; height: 70px; }
.logo { width: 36px; height: 36px; fill: #fff; }
.brand > span { font: 900 39px Inter, sans-serif; letter-spacing: .3px; margin-left: 11px; flex: 1; }
.profile { display: flex; align-items: center; font-size: 29px; color: #e9edfa; margin-top: -8px; }
.avatar { width: 72px; height: 72px; margin: 8px 17px 0 0; border: 5px solid #f1f3f8; border-radius: 50%; background: #7a8093; font-size: 11px; line-height: 62px; text-align: right; padding-right: 7px; color: #ddd; }
.profile span { width: 90px; letter-spacing: -.1px; }
.crumbs { margin: 40px 0 0 18px; font-size: 29px; color: #e8ecfb; display: flex; line-height: 40px; letter-spacing: -.6px; }
.crumbs i { margin: 0 14px 0 14px; color: #a3b0cb; } .crumbs em { color: #a5b5ee; }
.settings { position: absolute; left: 2200px; top: 140px; width: 311px; height: 34px; border-radius: 0 0 38px 0; background: #eff2f7; overflow: hidden; color: #212529; font-size: 28px; line-height: 38px; display: flex; gap: 9px; padding-left: 143px; }
.settings span { margin-top: -27px; }
.card { position: relative; width: 2464px; height: 797px; margin: -80px auto 0; background: #fff; border-radius: 10px; padding: 36px 40px 0; display: flex; flex-direction: column; flex: none; box-shadow: 0 2px 4px rgba(0,0,0,.06); }
.card h4 { margin: 0; font-size: 28px; line-height: 34px; font-weight: 700; color: #495057; letter-spacing: -.6px; }
.card p { margin: 12px 0 0; font-size: 25px; line-height: 40px; color: #7a8290; letter-spacing: -.3px; }
.dropzone { position: relative; height: 460px; margin-top: 50px; padding: 76px; flex: none; }
.dash { position: absolute; inset: 0; width: 2384px; height: 460px; }
.dash rect { fill: none; stroke: #ced4da; stroke-width: 4; stroke-dasharray: 12 8; }
.preview { width: 240px; height: 240px; border-radius: 40px; background: linear-gradient(#eaeaea, #d9d9d9); padding: 122px 0 0 26px; }
.preview span { display: block; width: 120px; background: #f0f0f0; border-radius: 6px; padding-left: 14px; font-size: 26px; line-height: 38px; color: #111; }
.send { width: 188px; height: 76px; margin: 48px auto 0; border: 0; border-radius: 6px; background: #3051d3; color: #fff; font: 29px "Open Sans", sans-serif; letter-spacing: 0; padding: 0 0 2px; }
.foot { margin-top: auto; height: 121px; background: linear-gradient(#fff 35%, #ededed); display: flex; justify-content: space-between; padding: 39px 48px 0; color: #74788d; font-size: 28px; line-height: 42px; letter-spacing: .17px; }
.foot .cr { letter-spacing: .6px; }
.by svg { display: inline-block; margin: 0 3px; vertical-align: -1px; }

/* open dialog */
.sheet-clip { position: absolute; left: 114px; top: 188px; width: 2334px; height: 1010px; overflow: hidden; pointer-events: none; }
.sheet { margin: 0 100px; height: 896px; border: 2px solid #6a6a6a; border-top: 0; border-bottom-color: #4e4e4e; box-shadow: 0 0 0 1px #111, 0 20px 50px rgba(0,0,0,.42); background: #363435; display: flex; flex-direction: column; color: #e4e4e4; font-size: 26px; }
.sheet-head { height: 84px; padding: 20px 21px 0 20px; background: linear-gradient(#494647, #3a3a3a 60%, #393939); display: flex; }
.btn { height: 44px; border-radius: 6px; background: linear-gradient(#6e6e6e, #676767); border-top: 2px solid #868686; display: flex; align-items: center; justify-content: center; }
.back { width: 49px; } .fwd { width: 49px; margin-left: 3px; }
.view { width: 88px; margin-left: 17px; gap: 8px; } .lt { color: #e6e6e6; }
.newf { width: 88px; margin-left: 12px; }
.popup { width: 414px; margin-left: 532px; justify-content: flex-start; padding: 0 9px 0 13px; }
.popup span { margin-left: 9px; flex: 1; letter-spacing: -.15px; color: #f0f0f0; } .popup em { color: #bdbdbd; }
.search { width: 651px; margin-left: auto; justify-content: flex-start; padding-left: 10px; gap: 9px; color: #e6e6e6; }
.search span { color: #989898; letter-spacing: -.2px; }
.btn span { margin-top: -2px; }
.sheet-body { height: 728px; display: flex; overflow: hidden; flex: none; }
.side { width: 310px; border-right: 2px solid #000; overflow: hidden; background: linear-gradient(#3a4674 0, #2c3865 3px, #2d3966 130px, #3d4262 200px, #4c4e5c 255px, #585858 320px, #5a5a5a 728px); }
.side h5 { margin: 14px 0 2px; height: 32px; font-size: 22px; line-height: 32px; font-weight: 500; padding-left: 16px; color: #a9b3df; letter-spacing: 0; }
.side h5.ic { margin: 24px 0 4px; color: #b8bccd; }
.side h5.lo { margin: 24px 0 2px; color: #c6c6c6; } .side h5.me { margin: 24px 0 2px; color: #c6c6c6; }
.it { height: 52px; display: flex; align-items: center; padding: 0 24px 0 34px; color: #fff; font-weight: 500; letter-spacing: -.45px; white-space: nowrap; }
.it svg { width: 36px; height: 34px; }
.it span { margin-left: 8px; flex: 1; }
.it.sel { height: 48px; background: #7d7f91; margin-bottom: 2px; }
.it .ej { width: 16px; height: 18px; margin-right: 8px; } .it .pie { width: 33px; }
.list { flex: 1; display: flex; flex-direction: column; }
.notice { height: 49px; border-top: 2px solid #4a4849; border-bottom: 2px solid #4d4b4c; display: flex; align-items: center; padding: 0 14px 0 20px; color: #bdbcbc; }
.notice b { flex: 1; font-weight: 700; font-size: 25px; letter-spacing: -.1px; }
.pill { height: 32px; border: 2px solid #8c8b8b; border-radius: 7px; color: #fff; font-size: 22px; line-height: 28px; text-align: center; margin-left: 16px; font-weight: 500; letter-spacing: -.3px; }
.up { width: 138px; } .lm { width: 166px; }
.cols { height: 47px; border-bottom: 2px solid #4d4b4c; display: grid; grid-template-columns: 1280px 348px 1fr; font-size: 22px; align-items: center; padding-left: 0; letter-spacing: -.05px; }
.cols > * { height: 36px; line-height: 36px; padding-left: 12px; border-right: 2px solid #4a4849; font-weight: 500; }
.cols b { font-weight: 600; padding: 0 15px 0 22px; display: flex; justify-content: space-between; align-items: center; }
.cols b svg { color: #9a9a9a; } .cols .sz { padding-left: 23px; border: 0; }
.rows { flex: 1; display: flex; flex-direction: column; justify-content: flex-end; overflow: hidden; position: relative; }
.row { height: 38px; flex: none; display: grid; grid-template-columns: 36px 39px 1fr 64px 330px 170px; align-items: center; padding: 0 22px 0 17px; background: #302e2f; color: #dedede; font-size: 25px; font-weight: 450; white-space: nowrap; letter-spacing: -.66px; }
.row:nth-child(even) { background: #242223; }
.row .caps { letter-spacing: -.84px; }
.row .long { letter-spacing: -.98px; }
.row time { color: #9e9d9e; letter-spacing: -.55px; } .row s { color: #9e9d9e; text-align: right; letter-spacing: -.3px; }
.t { width: 15px; height: 18px; } .d { width: 30px; height: 25px; } .f { width: 24px; height: 30px; margin-left: 3px; } .c { width: 32px; height: 24px; }
.sheet-foot { flex: 1; border-top: 3px solid #858585; background: linear-gradient(#333, #2a2a2a); display: flex; padding: 21px 20px 0; }
.fb { height: 38px; border-radius: 6px; background: #646464; border-top: 1px solid #7e7e7e; text-align: center; line-height: 36px; font-size: 26px; letter-spacing: .1px; color: #e6e6e6; }
.opt { width: 164px; } .can { width: 152px; margin-left: auto; } .open { width: 153px; margin-left: 19px; background: #414141; border-color: #4a4a4a; color: #767676; }

/* dock */
.dock { position: absolute; left: 88px; top: 1467px; width: 2384px; height: 150px; border-radius: 10px; border: 2px solid #46474c; background: linear-gradient(90deg, #1d202c 0, #1f222d 55%, #2a2429 80%, #33282b 100%); display: flex; padding-left: 6px; }
.app { width: 108px; height: 128px; flex: none; position: relative; display: flex; justify-content: center; padding-top: 17px; }
.app > svg { width: 88px; height: 88px; overflow: visible; }
.app > svg.xl { width: 100px; height: 100px; margin-top: -6px; }
.app.big > svg { width: 100px; }
.app:last-child > svg { height: 92px; width: 76px; }
.on::after { content: ""; position: absolute; left: 50%; bottom: 1px; margin-left: -4px; width: 8px; height: 8px; border-radius: 50%; background: #9a9ba3; }
.badge { position: absolute; left: 67px; top: 11px; min-width: 38px; height: 38px; border-radius: 19px; background: #ec3b33; color: #fff; font-size: 22px; font-weight: 400; line-height: 38px; text-align: center; }
.badge.wide { left: 51px; width: 55px; letter-spacing: -.7px; }
.sep { width: 50px; height: 96px; margin-top: 17px; flex: none; background: linear-gradient(#6b6c72, #6b6c72) 26px 0 / 2px 96px no-repeat; }
.mini { width: 16px; margin: 0 -8px; height: 128px; padding: 57px 0 0 4px; position: relative; }
.xd { width: 94px; height: 92px; margin-top: -3px; border: 4px solid #ff2bc2; border-radius: 16px; background: #2e001f; color: #ffd9f7; font: 600 54px/78px "Open Sans", sans-serif; text-align: center; letter-spacing: -1px; }
```
